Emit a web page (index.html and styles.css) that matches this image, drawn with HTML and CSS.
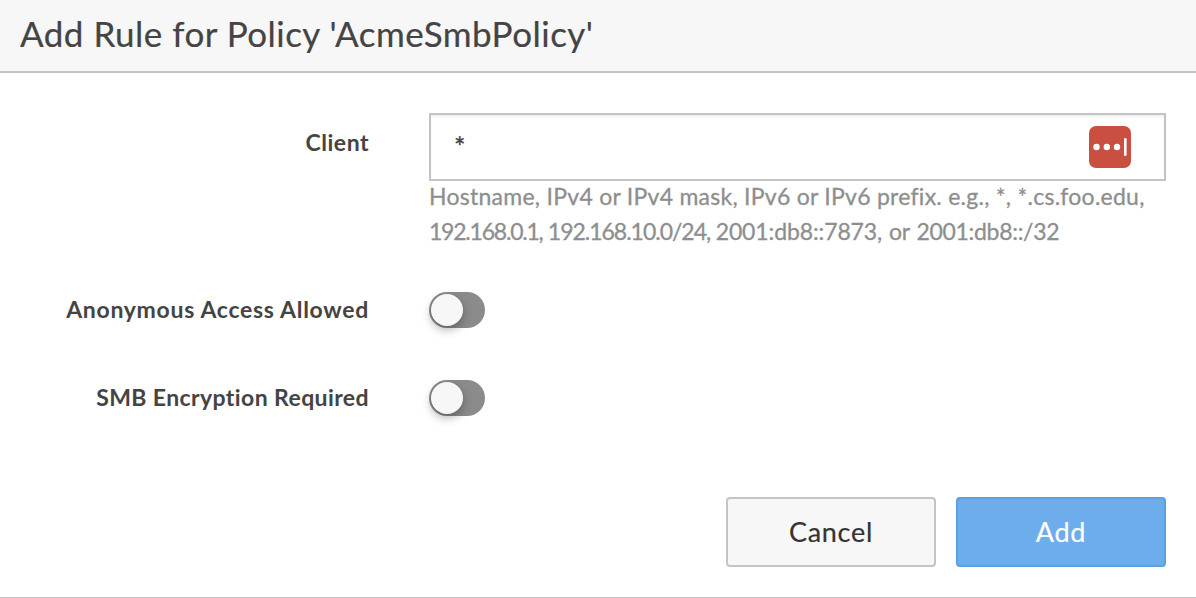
FILE: index.html
```
<!DOCTYPE html>
<html lang="en">
<head>
<meta charset="utf-8">
<title>Add Rule for Policy</title>
<link rel="stylesheet" href="styles.css">
</head>
<body>
<div class="dialog">
  <header class="dialog-header"><h1 class="dialog-title"><span>Add Rule for Policy 'AcmeSmbPolicy'</span></h1></header>
  <form class="dialog-body">
    <div class="row row-client">
      <label class="label label-client"><span>Client</span></label>
      <div class="field">
        <div class="input">
          <span class="value">*</span>
          <svg class="manager" width="42" height="42" viewBox="0 0 42 42">
            <rect width="42" height="42" rx="7" fill="#c94f40"/>
            <g fill="#fff"><circle cx="7.5" cy="21" r="3.2"/><circle cx="17.8" cy="21" r="3.2"/><circle cx="28" cy="21" r="3.2"/><rect x="35" y="12" width="2.6" height="18" rx="1.3"/></g>
          </svg>
        </div>
        <div class="help"><span class="help-a">Hostname, IPv4 or IPv4 mask, IPv6 or IPv6 prefix. e.g., *, *.cs.foo.edu,</span><br><span class="addr-host">192.168.0.1, </span><span class="addr-net">192.168.10.0/24, </span><span class="addr-v6">2001:db8::7873, or </span><span class="addr-prefix">2001:db8::/32</span></div>
      </div>
    </div>
    <div class="row row-toggle">
      <label class="label label-anon"><span>Anonymous Access Allowed</span></label>
      <div class="toggle"><div class="knob"></div></div>
    </div>
    <div class="row row-toggle">
      <label class="label label-smb"><span>SMB Encryption Required</span></label>
      <div class="toggle"><div class="knob"></div></div>
    </div>
  </form>
  <footer class="actions">
    <button class="btn cancel" type="button"><span>Cancel</span></button>
    <button class="btn add" type="button"><span>Add</span></button>
  </footer>
</div>
</body>
</html>
```
FILE: styles.css
```
* { box-sizing: border-box; }
body { margin: 0; background: #fff; color: #444; font-family: Lato, sans-serif; font-kerning: normal; font-variant-ligatures: none; }
.dialog { height: 598px; display: flex; flex-direction: column; border-bottom: 1px solid #c4c4c4; overflow: hidden; }
.dialog-header { height: 73px; flex: none; background: #f7f7f7; border-bottom: 2px solid #c4c4c4; padding: 12px 20px 0; }
.dialog-title { margin: 0; font-size: 35px; line-height: 42px; font-weight: 400; letter-spacing: 0.48px; white-space: nowrap; -webkit-text-stroke: 0.2px; }
.dialog-body { flex: 1; padding: 40px 30px 0 0; }
.row { display: grid; grid-template-columns: 369px 737px; column-gap: 60px; }
.row-client { height: 179px; }
.row-toggle { height: 36px; margin-bottom: 52px; align-items: center; }
.label { text-align: right; font-size: 23px; line-height: 34px; padding-bottom: 2px; font-weight: 700; white-space: nowrap; }
.label-client { padding-top: 12px; letter-spacing: 0.5px; }
.label-anon { letter-spacing: 0.7px; }
.label-smb { letter-spacing: 0.4px; }
.input { height: 68px; border: 2px solid #c4c4c4; box-shadow: inset 0 2px 2px rgba(0,0,0,.06); display: flex; align-items: center; justify-content: space-between; padding: 0 33px 0 23px; }
.value { font-size: 27px; line-height: 30px; padding-bottom: 1px; -webkit-text-stroke: 0.4px; }
.help { color: #8e8e8e; font-size: 23px; line-height: 35px; margin-top: -2px; white-space: nowrap; -webkit-text-stroke: 0.3px; }
.help-a { letter-spacing: 0.26px; }
.addr-host { letter-spacing: -1.22px; word-spacing: 0.6px; }
.addr-net { letter-spacing: -1.02px; word-spacing: 0.6px; }
.addr-v6 { letter-spacing: -0.12px; word-spacing: 1px; }
.addr-prefix { letter-spacing: -0.3px; }
.toggle { width: 56px; height: 36px; border-radius: 18px; background: #8b8b8b; padding: 2px; }
.knob { width: 32px; height: 32px; border-radius: 50%; background: #f7f7f7; box-shadow: 0 4px 10px rgba(0,0,0,.3); }
.actions { display: flex; flex: none; justify-content: flex-end; gap: 20px; padding: 0 30px 30px; }
.btn { width: 210px; height: 70px; border-radius: 4px; border: 2px solid #c4c4c4; padding: 0 0 1px; font: 400 27px/36px Lato, sans-serif; letter-spacing: 0.7px; -webkit-text-stroke: 0.2px; }
.cancel { background: #f7f7f7; color: #333; }
.add { background: #6eadeb; border-color: #5c9fe0; color: #fff; }
```
